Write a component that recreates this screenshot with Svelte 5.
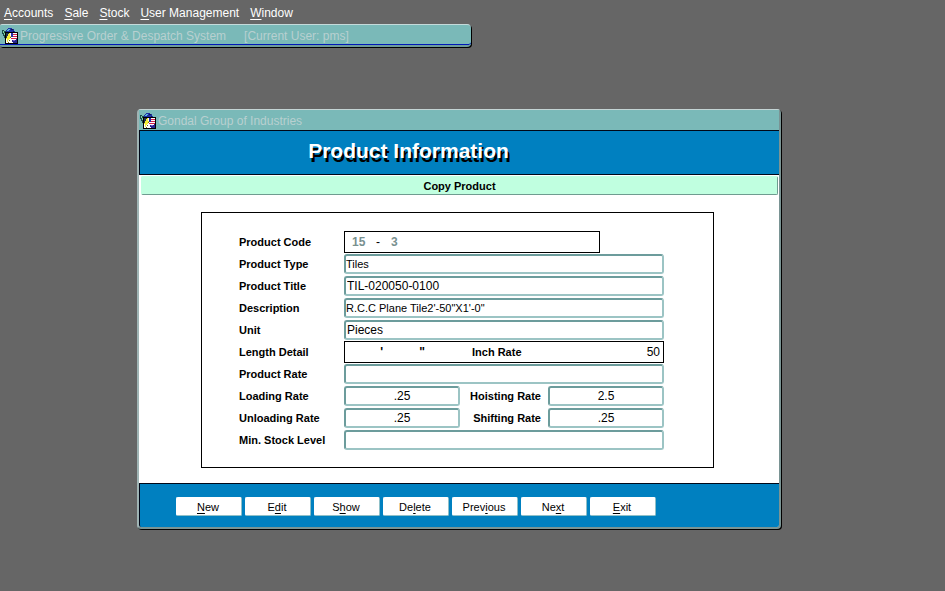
<script>
  const menus = [
    { key: 'A', rest: 'ccounts' },
    { key: 'S', rest: 'ale' },
    { key: 'S', rest: 'tock' },
    { key: 'U', rest: 'ser Management' },
    { key: 'W', rest: 'indow' }
  ];

  const actions = [
    ['', 'N', 'ew'],
    ['E', 'd', 'it'],
    ['S', 'h', 'ow'],
    ['De', 'l', 'ete'],
    ['Prev', 'i', 'ous'],
    ['Ne', 'x', 't'],
    ['', 'E', 'xit']
  ];

  let product = $state({
    group: '15',
    number: '3',
    type: 'Tiles',
    title: 'TIL-020050-0100',
    description: 'R.C.C Plane Tile2\'-50"X1\'-0"',
    unit: 'Pieces',
    feet: "'",
    inches: '"',
    inchRate: '50',
    rate: '',
    loading: '.25',
    hoisting: '2.5',
    unloading: '.25',
    shifting: '.25',
    minStock: ''
  });
</script>

{#snippet appIcon()}
  <svg class="icon" viewBox="0 0 16 16" shape-rendering="crispEdges" aria-hidden="true">
    <path d="M6 0h4v1h2v2h1v2H4V2h1V1h1z" fill="#1c2fa4" />
    <path d="M6 1h2v1H6zM5 2h2v1H5z" fill="#5bb7e0" />
    <path d="M9 1h2v1H9zM11 3h1v1h-1z" fill="#101850" />
    <path d="M0 2h2v1h2v2h1v5H2V8H1V6H0z" fill="#1d4b4b" />
    <path d="M1 3h1v2H1zM2 5h1v2H2z" fill="#7ed5a0" />
    <path d="M3 4h13v12H3z" fill="#000" />
    <path d="M4 5h11v10H4z" fill="#fff" />
    <path d="M11 6h4v1h-4zM11 8h4v1h-4zM9 10h6v1H9z" fill="#d02048" />
    <path d="M9 5h2v4H9z" fill="#2430a8" />
    <path d="M10 12h4v-1h1v4h-4v-1h-1z" fill="#26268c" />
    <path d="M11 12h2v1h-2z" fill="#7b5bd0" />
    <path d="M4 5h3v1H6v2H5v2H4z" fill="#20304c" />
    <path d="M7 5h1v3h1v1H8v2H7v1H6v2H5v-3H4v-1h1V8h1V6h1z" fill="#f6ee38" />
    <path d="M8 9h1v1H8zM7 12h1v1H7zM6 14h1v1H6z" fill="#777018" />
  </svg>
{/snippet}

<div class="desktop">
  <nav class="menubar">
    {#each menus as menu}
      <button type="button"><u>{menu.key}</u>{menu.rest}</button>
    {/each}
  </nav>

  <header class="app-title">
    {@render appIcon()}
    <span>Progressive Order &amp; Despatch System</span>
    <span class="user">[Current User: pms]</span>
  </header>

  <main class="window">
    <div class="caption">
      {@render appIcon()}
      <span>Gondal Group of Industries</span>
    </div>
    <h1>Product Information</h1>
    <div class="body">
      <button type="button" class="copy">Copy Product</button>
      <form class="frame">
        <label for="code">Product Code</label>
        <div class="boxed code">
          <input id="code" bind:value={product.group} />
          <span>-</span>
          <input aria-label="Product number" bind:value={product.number} />
        </div>

        <label for="type">Product Type</label>
        <input id="type" class="wide small" bind:value={product.type} />

        <label for="title">Product Title</label>
        <input id="title" class="wide" bind:value={product.title} />

        <label for="description">Description</label>
        <input id="description" class="wide small" bind:value={product.description} />

        <label for="unit">Unit</label>
        <input id="unit" class="wide" bind:value={product.unit} />

        <label for="feet">Length Detail</label>
        <div class="boxed length wide">
          <input id="feet" class="mark" bind:value={product.feet} />
          <input class="mark" aria-label="Inches" bind:value={product.inches} />
          <label for="inch-rate">Inch Rate</label>
          <input id="inch-rate" class="amount" bind:value={product.inchRate} />
        </div>

        <label for="rate">Product Rate</label>
        <input id="rate" class="wide" bind:value={product.rate} />

        <label for="loading">Loading Rate</label>
        <input id="loading" class="number" bind:value={product.loading} />
        <label for="hoisting" class="second">Hoisting Rate</label>
        <input id="hoisting" class="number" bind:value={product.hoisting} />

        <label for="unloading">Unloading Rate</label>
        <input id="unloading" class="number" bind:value={product.unloading} />
        <label for="shifting" class="second">Shifting Rate</label>
        <input id="shifting" class="number" bind:value={product.shifting} />

        <label for="min-stock">Min. Stock Level</label>
        <input id="min-stock" class="wide" bind:value={product.minStock} />
      </form>
    </div>
    <footer>
      {#each actions as [before, key, after]}
        <button type="button">{before}<u>{key}</u>{after}</button>
      {/each}
    </footer>
  </main>
</div>

<style>
  :global(body) {
    margin: 0;
    background: #666;
  }

  .desktop {
    position: relative;
    box-sizing: border-box;
    min-height: 100vh;
    background: #666;
    font-family: 'Liberation Sans', Arial, sans-serif;
    font-size: 12px;
    color: #000;
  }

  button,
  input {
    box-sizing: border-box;
    min-width: 0;
    margin: 0;
    font: inherit;
    color: inherit;
  }

  u {
    text-underline-offset: 2px;
    text-decoration-thickness: 1px;
    text-decoration-skip-ink: none;
  }

  .icon {
    flex: none;
    width: 16px;
    height: 16px;
  }

  .menubar {
    display: flex;
    gap: 11px;
    height: 24px;
    padding: 2px 4px 0;
    box-sizing: border-box;
  }

  .menubar button {
    padding: 0;
    border: 0;
    background: none;
    color: #fff;
  }

  .app-title,
  .caption {
    display: flex;
    align-items: center;
    gap: 2px;
    box-sizing: border-box;
    padding-top: 1px;
    background: #7ab9b8;
    color: #b8d0d0;
    white-space: pre;
  }

  .app-title {
    width: 50%;
    max-width: 471px;
    height: 23px;
    padding-left: 2px;
    border-top: 1px solid #c4dada;
    border-bottom: 2px solid #6f9c9c;
    border-radius: 2px 4px 4px 2px;
    box-shadow: inset 0 -1px #0018b8, 1px 1px #000;
  }

  .user {
    margin-left: 16px;
  }

  .window {
    position: absolute;
    top: 109px;
    left: 137px;
    right: 164px;
    min-width: 560px;
    box-sizing: border-box;
    border: 2px solid #7a9494;
    border-top: 1px solid #c4d4d4;
    border-left-color: #9fb4b4;
    border-radius: 4px;
    box-shadow: 1px 1px #000;
    background: #fff;
  }

  .caption {
    height: 20px;
    padding-left: 1px;
  }

  h1 {
    box-sizing: border-box;
    height: 45px;
    margin: 0;
    padding-right: 102px;
    border: 1px solid #000818;
    border-right: 0;
    background: #0080c0;
    color: #fff;
    font-size: 21px;
    line-height: 40px;
    text-align: center;
    text-shadow: 2px 4px #000;
  }

  .body {
    padding: 1px 1px 15px 2px;
  }

  .copy {
    display: block;
    width: 100%;
    height: 19px;
    padding: 0;
    border: 1px solid #c0ffe0;
    border-right-color: #6f9c90;
    border-bottom-color: #6f9c90;
    border-radius: 2px;
    background: #c0ffe0;
    font-size: 11px;
    font-weight: bold;
  }

  .frame {
    display: grid;
    grid-template-columns: 105px 1fr 88px 1fr;
    grid-auto-rows: 20px;
    row-gap: 2px;
    margin: 17px 64px 0 60px;
    padding: 19px 49px 17px 37px;
    border: 1px solid #000;
  }

  label {
    font-size: 11px;
    font-weight: bold;
    line-height: 21px;
    white-space: nowrap;
  }

  .second {
    padding-right: 7px;
    text-align: right;
  }

  .frame input {
    height: 20px;
    padding: 0 1px;
    border: 2px solid #9cc4c4;
    border-top-color: #6c9c9c;
    border-left-color: #6c9c9c;
    border-radius: 3px;
    background: #fff;
    outline: 0;
  }

  .wide {
    grid-column: 2 / -1;
  }

  .frame .small {
    padding: 0;
    font-size: 11px;
  }

  .frame .number {
    text-align: center;
  }

  .boxed {
    display: flex;
    align-items: center;
    box-sizing: border-box;
    height: 22px;
    margin: -1px 0;
    border: 1px solid #000;
  }

  .frame .boxed input {
    height: 18px;
    padding: 0;
    border: 0;
    background: none;
  }

  .code {
    grid-column: 2 / -1;
    width: 80%;
    padding-left: 7px;
  }

  .frame .code input {
    width: 24px;
    color: #78908f;
    font-weight: bold;
  }

  .code span {
    width: 15px;
  }

  .length {
    padding-right: 3px;
  }

  .length .mark {
    width: 42px;
    text-align: right;
    font-weight: bold;
  }

  .length .mark:first-child {
    width: 38px;
  }

  .length label {
    margin-left: 47px;
  }

  .length .amount {
    flex: 1;
    text-align: right;
  }

  footer {
    display: flex;
    gap: 3px;
    box-sizing: border-box;
    height: 44px;
    padding: 13px 36px 0;
    border-top: 1px solid #000818;
    border-left: 1px solid #000818;
    border-radius: 0 0 2px 2px;
    background: #0080c0;
  }

  footer button {
    width: 66px;
    height: 19px;
    padding: 1px 2px 0 0;
    border: 1px solid #fff;
    border-right-color: #8fc0c8;
    border-bottom-color: #8fc0c8;
    border-radius: 2px;
    background: #fff;
    font-size: 11px;
  }
</style>
